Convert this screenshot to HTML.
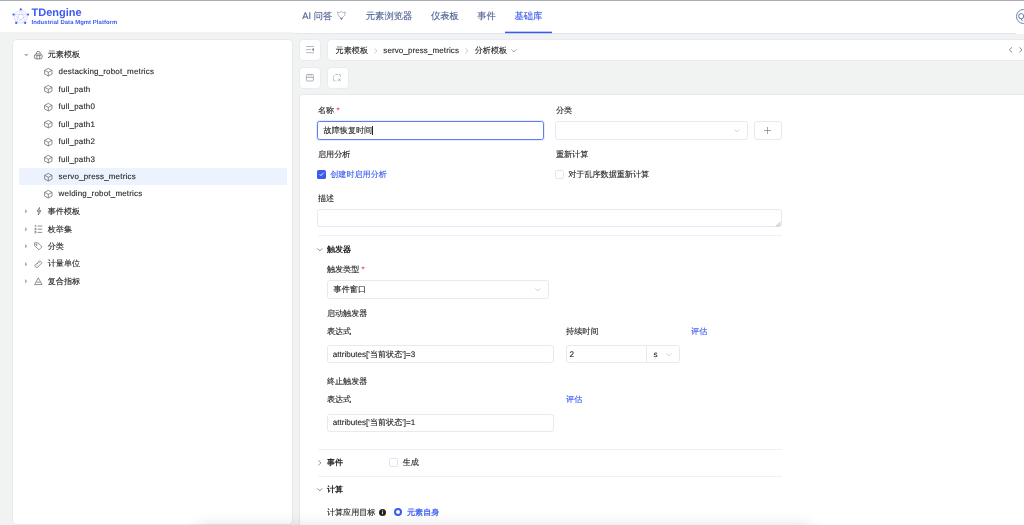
<!DOCTYPE html>
<html lang="zh">
<head>
<meta charset="utf-8">
<title>TDengine IDMP</title>
<style>
*{box-sizing:border-box;margin:0;padding:0}
html,body{width:1024px;height:525px;overflow:hidden;background:#f1f3f2}
body{position:relative;text-rendering:geometricPrecision;font-family:"Liberation Sans",sans-serif;font-size:8px;color:#333}
.a{position:absolute}
.t{position:absolute;white-space:nowrap;line-height:12px;height:12px;font-size:8.1px;color:#262626;-webkit-text-stroke:0.12px currentColor}
.l{font-size:8px;letter-spacing:0.18px}
.b{font-weight:bold;-webkit-text-stroke:0}
.blue{color:#3b5bf0}
.nav{font-size:9.3px;color:#4c5f93}
.box{position:absolute;background:#fff;border:1px solid #e6e8f2;border-radius:2.6px}
.btn{position:absolute;background:#fff;border-radius:3.5px;box-shadow:0 0 0 1px rgba(205,210,240,0.22)}
.hr{position:absolute;left:317.5px;width:464.5px;height:1px;background:#f0f1f8}
svg{position:absolute;overflow:visible}
.req{color:#f0444a}
</style>
</head>
<body>
<div id="wrap" style="position:absolute;left:0;top:0;width:1024px;height:525px;will-change:transform">
<div class="a" style="left:0;top:0;width:1024px;height:32px;background:#fff"></div>
<div class="a" style="left:293px;top:32px;width:731px;height:1px;background:#fff"></div>
<div class="a" style="left:293px;top:33px;width:723px;height:1px;background:#e4e6f2"></div>
<div class="a" style="left:0;top:0;width:1024px;height:1px;background:#a9adb3"></div>
<svg style="left:11px;top:6px" width="20" height="20" viewBox="11 6 20 20">
  <g stroke="#3d5af1" stroke-width="0.45" fill="none" opacity="0.45">
    <path d="M20.8 9.3 L28.1 14.5 L25.2 22.9 L16.2 22.9 L13.5 14.5 Z"/>
    <path d="M20.8 9.3 L25.2 22.9 L13.5 14.5 L28.1 14.5 L16.2 22.9 Z"/>
  </g>
  <g fill="#3d5af1">
    <circle cx="20.8" cy="9.3" r="1.05"/><circle cx="28.1" cy="14.5" r="1.05"/><circle cx="25.2" cy="22.9" r="1.05"/><circle cx="16.2" cy="22.9" r="1.05"/><circle cx="13.5" cy="14.5" r="1.05"/>
  </g>
</svg>
<div class="t b" id="brand" style="left:31.6px;top:6.6px;font-size:11px;line-height:13px;height:13px;color:#3d5af1">TDengine</div>
<div class="t b" id="sub" style="left:31.6px;top:19.3px;letter-spacing:0.065px;font-size:5.9px;line-height:8px;height:8px;color:#3d5af1">Industrial Data Mgmt Platform</div>
<div class="t nav" id="n1" style="left:302.3px;top:10.40px">AI 问答</div>
<svg style="left:337px;top:11.4px" width="8.8" height="9.2" viewBox="0 0 8.8 9.2" fill="none" stroke="#4c5f93" stroke-width="0.6" stroke-linejoin="round" opacity="0.75"><path d="M0.5 0.9 L2.3 1.6 L4.4 0.5 L6.5 1.6 L8.3 0.9 L7.6 4.6 L5.7 6.3 L4.4 8.7 L3.1 6.3 L1.2 4.6 Z"/><path d="M3.4 7 L4.4 8.6 L5.4 7 Z" fill="#4c5f93"/></svg>
<div class="t nav" id="n2" style="left:365.8px;top:10.399999999999999px">元素浏览器</div>
<div class="t nav" id="n3" style="left:430.9px;top:10.399999999999999px">仪表板</div>
<div class="t nav" id="n4" style="left:477.3px;top:10.399999999999999px">事件</div>
<div class="t nav" id="n5" style="left:514.5px;top:10.399999999999999px;color:#3b5bf0">基础库</div>
<div class="a" style="left:505px;top:31px;width:47px;height:1px;background:#3b5bf0;opacity:0.35"></div>
<div class="a" style="left:505px;top:32px;width:47px;height:1px;background:#3b5bf0"></div>
<div class="a" style="left:505px;top:33px;width:47px;height:1px;background:#3b5bf0;opacity:0.2"></div>
<div class="a" style="left:1016px;top:32px;width:8px;height:2px;background:#fff"></div>
<div class="a" style="left:1016px;top:8.6px;width:15.4px;height:15.4px;border:1px solid #6f7fae;border-radius:50%;background:#fff"></div>
<div class="t" style="left:1017.9px;top:11.3px;font-size:8.2px;color:#4c5f93;-webkit-text-stroke:0">Q</div>
<div class="a" id="side" style="left:13px;top:40px;width:279px;height:484px;background:#fff;border-radius:4px;box-shadow:0 0 0 1px rgba(205,208,225,0.3)"></div>
<div class="a" style="left:19px;top:168px;width:267.5px;height:17px;background:#ecf3fe"></div>
<svg style="left:23.6px;top:54.00px" width="4.6" height="2.4" viewBox="0 0 4.6 2.4"><path d="M0 0 H4.6 L2.3 2.4 Z" fill="#adb0bc"/></svg>
<svg style="left:34px;top:50.60px" width="8.6" height="8.4" viewBox="0 0 8.6 8.4" fill="none" stroke="#555" stroke-width="0.7"><path d="M2.5 3 V1.7 Q2.5 0.4 4.3 0.4 Q6.1 0.4 6.1 1.7 V3"/><rect x="0.4" y="3" width="7.8" height="4.9" rx="1.9"/><path d="M2.9 4.6 V7.9 M5.7 4.6 V7.9 M1.6 4.6 H7"/></svg>
<div class="t " id="r0" style="left:47.7px;top:49.20px">元素模板</div>
<svg style="left:44.1px;top:67.93px" width="8.6" height="8.4" viewBox="0 0 8.6 8.4" fill="none" stroke="#555" stroke-width="0.65" stroke-linejoin="round"><path d="M4.3 0.4 L8 2.3 V6.1 L4.3 8 L0.6 6.1 V2.3 Z"/><path d="M0.7 2.4 L4.3 4.3 L7.9 2.4 M4.3 4.3 V8"/></svg>
<div class="t l" id="k0" style="left:58.6px;top:66.43px">destacking_robot_metrics</div>
<svg style="left:44.1px;top:85.36px" width="8.6" height="8.4" viewBox="0 0 8.6 8.4" fill="none" stroke="#555" stroke-width="0.65" stroke-linejoin="round"><path d="M4.3 0.4 L8 2.3 V6.1 L4.3 8 L0.6 6.1 V2.3 Z"/><path d="M0.7 2.4 L4.3 4.3 L7.9 2.4 M4.3 4.3 V8"/></svg>
<div class="t l" id="k1" style="left:58.6px;top:83.86px">full_path</div>
<svg style="left:44.1px;top:102.79px" width="8.6" height="8.4" viewBox="0 0 8.6 8.4" fill="none" stroke="#555" stroke-width="0.65" stroke-linejoin="round"><path d="M4.3 0.4 L8 2.3 V6.1 L4.3 8 L0.6 6.1 V2.3 Z"/><path d="M0.7 2.4 L4.3 4.3 L7.9 2.4 M4.3 4.3 V8"/></svg>
<div class="t l" id="k2" style="left:58.6px;top:101.29px">full_path0</div>
<svg style="left:44.1px;top:120.22px" width="8.6" height="8.4" viewBox="0 0 8.6 8.4" fill="none" stroke="#555" stroke-width="0.65" stroke-linejoin="round"><path d="M4.3 0.4 L8 2.3 V6.1 L4.3 8 L0.6 6.1 V2.3 Z"/><path d="M0.7 2.4 L4.3 4.3 L7.9 2.4 M4.3 4.3 V8"/></svg>
<div class="t l" id="k3" style="left:58.6px;top:118.72px">full_path1</div>
<svg style="left:44.1px;top:137.65px" width="8.6" height="8.4" viewBox="0 0 8.6 8.4" fill="none" stroke="#555" stroke-width="0.65" stroke-linejoin="round"><path d="M4.3 0.4 L8 2.3 V6.1 L4.3 8 L0.6 6.1 V2.3 Z"/><path d="M0.7 2.4 L4.3 4.3 L7.9 2.4 M4.3 4.3 V8"/></svg>
<div class="t l" id="k4" style="left:58.6px;top:136.15px">full_path2</div>
<svg style="left:44.1px;top:155.08px" width="8.6" height="8.4" viewBox="0 0 8.6 8.4" fill="none" stroke="#555" stroke-width="0.65" stroke-linejoin="round"><path d="M4.3 0.4 L8 2.3 V6.1 L4.3 8 L0.6 6.1 V2.3 Z"/><path d="M0.7 2.4 L4.3 4.3 L7.9 2.4 M4.3 4.3 V8"/></svg>
<div class="t l" id="k5" style="left:58.6px;top:153.58px">full_path3</div>
<svg style="left:44.1px;top:172.51px" width="8.6" height="8.4" viewBox="0 0 8.6 8.4" fill="none" stroke="#555" stroke-width="0.65" stroke-linejoin="round"><path d="M4.3 0.4 L8 2.3 V6.1 L4.3 8 L0.6 6.1 V2.3 Z"/><path d="M0.7 2.4 L4.3 4.3 L7.9 2.4 M4.3 4.3 V8"/></svg>
<div class="t l" id="k6" style="left:58.6px;top:171.01px">servo_press_metrics</div>
<svg style="left:44.1px;top:189.94px" width="8.6" height="8.4" viewBox="0 0 8.6 8.4" fill="none" stroke="#555" stroke-width="0.65" stroke-linejoin="round"><path d="M4.3 0.4 L8 2.3 V6.1 L4.3 8 L0.6 6.1 V2.3 Z"/><path d="M0.7 2.4 L4.3 4.3 L7.9 2.4 M4.3 4.3 V8"/></svg>
<div class="t l" id="k7" style="left:58.6px;top:188.44px">welding_robot_metrics</div>
<svg style="left:24.6px;top:209.27px" width="2.4" height="4.6" viewBox="0 0 2.4 4.6"><path d="M0 0 V4.6 L2.4 2.3 Z" fill="#adb0bc"/></svg>
<div class="t" id="g0" style="left:47.7px;top:206.07px">事件模板</div>
<svg style="left:35.5px;top:207.37px" width="6" height="8.4" viewBox="0 0 6 8.4" fill="none" stroke="#555" stroke-width="0.65" stroke-linejoin="round"><path d="M3.6 0.4 L1 4.4 H3.2 L2.2 8 L5 3.6 H2.9 Z"/></svg>
<svg style="left:24.6px;top:226.70px" width="2.4" height="4.6" viewBox="0 0 2.4 4.6"><path d="M0 0 V4.6 L2.4 2.3 Z" fill="#adb0bc"/></svg>
<div class="t" id="g1" style="left:47.7px;top:223.50px">枚举集</div>
<svg style="left:34px;top:224.80px" width="8.6" height="8.4" viewBox="0 0 8.6 8.4" fill="none" stroke="#555" stroke-width="0.65"><path d="M3.6 1 H8.2 M3.6 4.2 H8.2 M3.6 7.4 H8.2 M0.6 0.6 H1.8 V2 M0.6 3.4 H2 V4.8 H0.6 M0.6 6.4 H2 V8 H0.6"/></svg>
<svg style="left:24.6px;top:244.13px" width="2.4" height="4.6" viewBox="0 0 2.4 4.6"><path d="M0 0 V4.6 L2.4 2.3 Z" fill="#adb0bc"/></svg>
<div class="t" id="g2" style="left:47.7px;top:240.93px">分类</div>
<svg style="left:34px;top:242.23px" width="8.6" height="8.4" viewBox="0 0 8.6 8.4" fill="none" stroke="#555" stroke-width="0.65" stroke-linejoin="round"><path d="M0.6 0.8 H4 L8 4.8 L5 7.8 L0.6 3.8 Z"/><circle cx="2.6" cy="2.8" r="0.6"/></svg>
<svg style="left:24.6px;top:261.56px" width="2.4" height="4.6" viewBox="0 0 2.4 4.6"><path d="M0 0 V4.6 L2.4 2.3 Z" fill="#adb0bc"/></svg>
<div class="t" id="g3" style="left:47.7px;top:258.36px">计量单位</div>
<svg style="left:34px;top:259.66px" width="8.6" height="8.4" viewBox="0 0 8.6 8.4" fill="none" stroke="#555" stroke-width="0.65" stroke-linejoin="round"><path d="M5.8 0.6 L8 2.8 L2.8 8 L0.6 5.8 Z"/><path d="M4.6 1.8 L5.6 2.8 M3.2 3.2 L4.2 4.2 M1.9 4.6 L2.9 5.6"/></svg>
<svg style="left:24.6px;top:278.99px" width="2.4" height="4.6" viewBox="0 0 2.4 4.6"><path d="M0 0 V4.6 L2.4 2.3 Z" fill="#adb0bc"/></svg>
<div class="t" id="g4" style="left:47.7px;top:275.79px">复合指标</div>
<svg style="left:34px;top:277.09px" width="8.6" height="8.4" viewBox="0 0 8.6 8.4" fill="none" stroke="#555" stroke-width="0.65" stroke-linejoin="round"><path d="M4.3 0.8 L8 7.6 H0.6 Z"/><path d="M2.4 5.2 H6.2"/></svg>
<div class="btn" style="left:300px;top:40px;width:20px;height:20px"></div>
<div class="btn" style="left:327.5px;top:40px;width:720px;height:20px"></div>
<div class="btn" style="left:300px;top:67.5px;width:20px;height:20px"></div>
<div class="btn" style="left:327.5px;top:67.5px;width:20px;height:20px"></div>
<svg style="left:306px;top:46.4px" width="8.2" height="7.2" viewBox="0 0 8.2 7.2" fill="none" stroke="#888c98" stroke-width="0.6"><path d="M0 0.5 H8 M0 3.6 H5 M0 6.7 H8"/><path d="M8 1.7 V5.5 L5.6 3.6 Z" fill="#888c98" stroke="none"/></svg>
<svg style="left:306.2px;top:73.7px" width="7.8" height="7.4" viewBox="0 0 7.8 7.4" fill="none" stroke="#888c98" stroke-width="0.65"><rect x="0.4" y="0.4" width="7" height="6.6" rx="0.9"/><path d="M0.4 3.4 H7.4" /><path d="M2.2 0.4 V2 H5.6 V0.4" opacity="0.5"/></svg>
<svg style="left:333.2px;top:73.7px" width="8.2" height="7.4" viewBox="0 0 8.2 7.4" fill="none" stroke="#888c98" stroke-width="0.65"><path d="M7.4 3 V0.5 H2.2 L0.4 2.4 V6.8 H3.6" stroke-dasharray="1.7 0.8"/><path d="M5.2 4.6 L7.6 7 M7.6 4.6 L5.2 7"/></svg>
<div class="t " style="left:335.6px;top:44.80px;">元素模板</div>
<svg style="left:374px;top:47.50px" width="3.4" height="5.6" viewBox="0 0 3.4 5.6" fill="none" stroke="#aaa" stroke-width="0.6"><path d="M0.4 0.3 L3 2.8 L0.4 5.3"/></svg>
<div class="t l" id="bc2" style="letter-spacing:0.1px;left:383.3px;top:44.8px">servo_press_metrics</div>
<svg style="left:465.3px;top:47.50px" width="3.4" height="5.6" viewBox="0 0 3.4 5.6" fill="none" stroke="#aaa" stroke-width="0.6"><path d="M0.4 0.3 L3 2.8 L0.4 5.3"/></svg>
<div class="t " style="left:474.7px;top:44.80px;">分析模板</div>
<svg style="left:511.4px;top:49.10px" width="5.6" height="3.4" viewBox="0 0 5.6 3.4" fill="none" stroke="#666" stroke-width="0.6"><path d="M0.3 0.4 L2.8 3 L5.3 0.4"/></svg>
<svg style="left:1008.8px;top:47.20px" width="3.4" height="5.6" viewBox="0 0 3.4 5.6" fill="none" stroke="#555" stroke-width="0.7"><path d="M3 0.3 L0.4 2.8 L3 5.3"/></svg>
<svg style="left:1018.8px;top:47.20px" width="3.4" height="5.6" viewBox="0 0 3.4 5.6" fill="none" stroke="#555" stroke-width="0.7"><path d="M0.4 0.3 L3 2.8 L0.4 5.3"/></svg>
<div class="a" id="panel" style="left:300px;top:95px;width:760px;height:460px;background:#fff;border-radius:4px;box-shadow:0 0 0 1px rgba(205,208,225,0.3)"></div>
<div class="t " style="left:318px;top:104.70px;">名称 <span class="req">*</span></div>
<div class="t " style="left:555.9px;top:104.70px;">分类</div>
<div class="box" style="left:317.3px;top:121.3px;width:226.3px;height:18.5px;border-color:#5f7cf6;box-shadow:0 0 0 1px #e6ebfe"></div>
<div class="t " style="left:323.6px;top:125.10px;">故障恢复时间</div>
<div class="a" style="left:372.4px;top:126.2px;width:0.7px;height:8.8px;background:#222"></div>
<div class="box" style="left:555.3px;top:121.3px;width:192.8px;height:18.5px"></div>
<svg style="left:734.4px;top:129.20px" width="5.6" height="3.4" viewBox="0 0 5.6 3.4" fill="none" stroke="#b5b8c4" stroke-width="0.6"><path d="M0.3 0.4 L2.8 3 L5.3 0.4"/></svg>
<div class="box" style="left:754.2px;top:121.3px;width:27.8px;height:18.5px"></div>
<svg style="left:764.2px;top:127px" width="7" height="7" viewBox="0 0 7 7" stroke="#777" stroke-width="0.65"><path d="M3.5 0 V7 M0 3.5 H7"/></svg>
<div class="t " style="left:318px;top:148.90px;">启用分析</div>
<div class="t " style="left:555.9px;top:148.90px;">重新计算</div>
<div class="a" style="left:317.4px;top:170.4px;width:8.4px;height:8.4px;background:#3b5bf0;border-radius:1.6px"></div>
<svg style="left:319px;top:172.4px" width="5.2" height="4.4" viewBox="0 0 5.2 4.4" fill="none" stroke="#fff" stroke-width="0.9"><path d="M0.6 2.2 L2 3.6 L4.7 0.7"/></svg>
<div class="t blue" style="left:330.2px;top:169.00px;">创建时启用分析</div>
<div class="a" style="left:555.4px;top:170.4px;width:8.4px;height:8.4px;background:#fff;border:1px solid #e1e4ee;border-radius:1.6px"></div>
<div class="t " style="left:568.2px;top:169.00px;">对于乱序数据重新计算</div>
<div class="t " style="left:318px;top:193.10px;">描述</div>
<div class="box" style="left:317.3px;top:209.1px;width:464.7px;height:18px"></div>
<svg style="left:776.4px;top:222px" width="4.6" height="4.6" viewBox="0 0 4.6 4.6" stroke="#666" stroke-width="0.55"><path d="M0.2 4.4 L4.4 0.2 M2.4 4.4 L4.4 2.4"/></svg>
<div class="hr" style="top:235px"></div>
<svg style="left:317.3px;top:247.60px" width="5.6" height="3.4" viewBox="0 0 5.6 3.4" fill="none" stroke="#555" stroke-width="0.65"><path d="M0.3 0.4 L2.8 3 L5.3 0.4"/></svg>
<div class="t b" style="left:326.9px;top:243.80px;">触发器</div>
<div class="t " style="left:326.9px;top:263.50px;">触发类型 <span class="req">*</span></div>
<div class="box" style="left:326.9px;top:280.3px;width:221.8px;height:18.3px"></div>
<div class="t " style="left:333.6px;top:284.30px;">事件窗口</div>
<svg style="left:534.8px;top:288.30px" width="5.6" height="3.4" viewBox="0 0 5.6 3.4" fill="none" stroke="#b5b8c4" stroke-width="0.6"><path d="M0.3 0.4 L2.8 3 L5.3 0.4"/></svg>
<div class="t " style="left:326.9px;top:307.90px;">启动触发器</div>
<div class="t " style="left:326.9px;top:326.20px;">表达式</div>
<div class="t " style="left:566.1px;top:325.80px;">持续时间</div>
<div class="t blue" style="left:691.1px;top:325.80px;">评估</div>
<div class="box" style="left:326.9px;top:345.2px;width:227.2px;height:18.3px"></div>
<div class="t " style="left:332.8px;top:348.90px;font-size:8.1px">attributes['当前状态']=3</div>
<div class="box" style="left:565.5px;top:345.2px;width:114px;height:18.3px"></div>
<div class="a" style="left:646.4px;top:345.7px;width:1px;height:17.3px;background:#e6e8f2"></div>
<div class="t " style="left:569.6px;top:348.90px;font-size:8.1px">2</div>
<div class="t " style="left:653.4px;top:349.10px;font-size:8.1px">s</div>
<svg style="left:665.6px;top:353.00px" width="5.6" height="3.4" viewBox="0 0 5.6 3.4" fill="none" stroke="#b5b8c4" stroke-width="0.6"><path d="M0.3 0.4 L2.8 3 L5.3 0.4"/></svg>
<div class="t " style="left:326.9px;top:376.20px;">终止触发器</div>
<div class="t " style="left:326.9px;top:394.20px;">表达式</div>
<div class="t blue" style="left:566.1px;top:394.20px;">评估</div>
<div class="box" style="left:326.9px;top:413.7px;width:227.2px;height:18.3px"></div>
<div class="t " style="left:332.8px;top:417.30px;font-size:8.1px">attributes['当前状态']=1</div>
<div class="hr" style="top:449px"></div>
<svg style="left:318.2px;top:460.00px" width="3.4" height="5.6" viewBox="0 0 3.4 5.6" fill="none" stroke="#555" stroke-width="0.65"><path d="M0.4 0.3 L3 2.8 L0.4 5.3"/></svg>
<div class="t b" style="left:326.9px;top:457.30px;">事件</div>
<div class="a" style="left:389.4px;top:458.3px;width:8.4px;height:8.4px;background:#fff;border:1px solid #e1e4ee;border-radius:1.6px"></div>
<div class="t " style="left:402.7px;top:457.30px;">生成</div>
<div class="hr" style="top:475.5px"></div>
<svg style="left:317.3px;top:487.80px" width="5.6" height="3.4" viewBox="0 0 5.6 3.4" fill="none" stroke="#555" stroke-width="0.65"><path d="M0.3 0.4 L2.8 3 L5.3 0.4"/></svg>
<div class="t b" style="left:326.9px;top:483.90px;">计算</div>
<div class="t " style="left:326.9px;top:506.80px;">计算应用目标</div>
<svg style="left:379px;top:508.8px" width="7" height="7" viewBox="0 0 7 7"><circle cx="3.5" cy="3.5" r="3.5" fill="#222"/><circle cx="3.6" cy="1.9" r="0.55" fill="#fff"/><path d="M3 3 H3.9 V5.3 H3.1 V3.6 H3 Z" fill="#fff"/></svg>
<div class="a" style="left:393.9px;top:508.1px;width:8.4px;height:8.4px;border-radius:50%;border:2.9px solid #3b5bf0;background:#fff"></div>
<div class="t blue" style="left:407px;top:506.80px;-webkit-text-stroke:0.25px currentColor">元素自身</div>
<div class="a" style="left:200px;top:531px;width:610px;height:10px;border-radius:5px;background:#000;box-shadow:0 0 16px 4px rgba(0,0,0,0.16)"></div>
</div>
</body>
</html>
